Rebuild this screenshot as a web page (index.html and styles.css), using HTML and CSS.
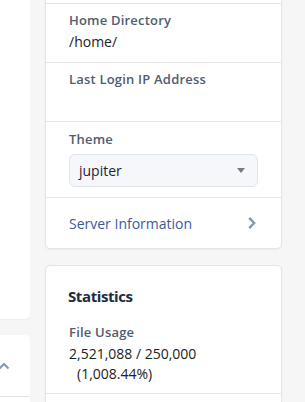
FILE: index.html
```html
<!DOCTYPE html>
<html lang="en">
<head>
    <meta charset="UTF-8">
    <meta name="viewport" content="width=device-width, initial-scale=1.0">
    <title>cPanel - Tools</title>
    <link rel="stylesheet" href="styles.css">
</head>
<body>
    <div class="layout">
        <div class="col-left">
            <div class="card left-card left-top"></div>
            <div class="card left-card">
                <div class="collapse-head">
                    <svg class="chev-up" width="12" height="8" viewBox="0 0 12 8">
                        <path d="M1.5 6.5 L6 2 L10.5 6.5" fill="none" stroke="#8797ae" stroke-width="2"/>
                    </svg>
                </div>
                <div class="collapse-body"></div>
            </div>
        </div>
        <div class="col-right">
            <div class="card info-card">
                <div class="row row-tail"></div>
                <div class="row">
                    <div class="label">Home Directory</div>
                    <div class="value">/home/</div>
                </div>
                <div class="row">
                    <div class="label">Last Login IP Address</div>
                    <div class="value"></div>
                </div>
                <div class="row row-theme">
                    <div class="label">Theme</div>
                    <div class="select">
                        <span>jupiter</span>
                        <span class="caret"></span>
                    </div>
                </div>
                <a class="row row-link" href="#">
                    <span>Server Information</span>
                    <svg width="10" height="14" viewBox="0 0 10 14">
                        <path d="M2.2 1.8 L7.2 7 L2.2 12.2" fill="none" stroke="#8797ae" stroke-width="2.4"/>
                    </svg>
                </a>
            </div>
            <div class="card stats-card">
                <h3 class="card-title">Statistics</h3>
                <div class="row stat-row">
                    <div class="label">File Usage</div>
                    <div class="value">
                        2,521,088 / 250,000
                        <span class="pct">(1,008.44%)</span>
                    </div>
                </div>
            </div>
        </div>
    </div>
</body>
</html>
```

FILE: styles.css
```css
* {
    margin: 0;
    padding: 0;
    box-sizing: border-box;
}
body {
    background: #f6f6f6;
    font-family: "Open Sans", "Liberation Sans", sans-serif;
    color: #222;
    overflow: hidden;
}
.layout {
    display: flex;
    gap: 15px;
    margin-top: -20px;
    margin-left: -200px;
    padding-right: 23px;
}
.col-left {
    flex: 0 0 230px;
    display: flex;
    flex-direction: column;
    gap: 16px;
}
.col-right {
    flex: 1;
    display: flex;
    flex-direction: column;
    gap: 16px;
}
.card {
    background: #fff;
    border: 1px solid #e4e4e4;
    border-radius: 5px;
    box-shadow: 0 1px 2px rgba(0, 0, 0, 0.04);
}
.left-card {
    border: none;
}
.left-top {
    height: 339px;
}
.collapse-head {
    display: flex;
    justify-content: flex-end;
    align-items: center;
    height: 62px;
    padding-right: 20px;
    border-bottom: 1px solid #e4e4e4;
}
.collapse-body {
    height: 80px;
}
.row {
    display: block;
    padding: 7px 23px 9px;
    border-bottom: 1px solid #e4e4e4;
}
.row-tail {
    height: 23px;
    padding: 0;
}
.label {
    font-size: 13px;
    line-height: 18px;
    font-weight: 600;
    letter-spacing: 0.2px;
    color: #505c70;
}
.value {
    min-height: 22px;
    font-size: 14px;
    line-height: 22px;
    margin-top: 2px;
    color: #222;
}
.row-theme {
    padding: 8px 23px 10px;
}
.select {
    display: flex;
    justify-content: space-between;
    align-items: center;
    margin-top: 6px;
    height: 33px;
    padding: 0 12px 0 9px;
    background: #f5f7fb;
    border: 1px solid #dfe4eb;
    border-radius: 6px;
    font-size: 14px;
    color: #1e2430;
}
.caret {
    width: 0;
    height: 0;
    border-left: 4px solid transparent;
    border-right: 4px solid transparent;
    border-top: 5px solid #7a7a7a;
}
.row-link {
    display: flex;
    justify-content: space-between;
    align-items: center;
    height: 50px;
    padding: 0 24px 0 23px;
    border-bottom: none;
    text-decoration: none;
    font-size: 14px;
    color: #3a5a9f;
}
.stats-card {
    height: 300px;
}
.card-title {
    padding: 18px 22px 0;
    font-size: 15px;
    line-height: 24px;
    font-weight: 700;
    letter-spacing: -0.4px;
    color: #1b2b42;
}
.stat-row {
    padding: 15px 23px 9px;
}
.stat-row .value {
    line-height: 20px;
    margin-top: 3px;
}
.pct {
    display: block;
    padding-left: 8px;
}
```
